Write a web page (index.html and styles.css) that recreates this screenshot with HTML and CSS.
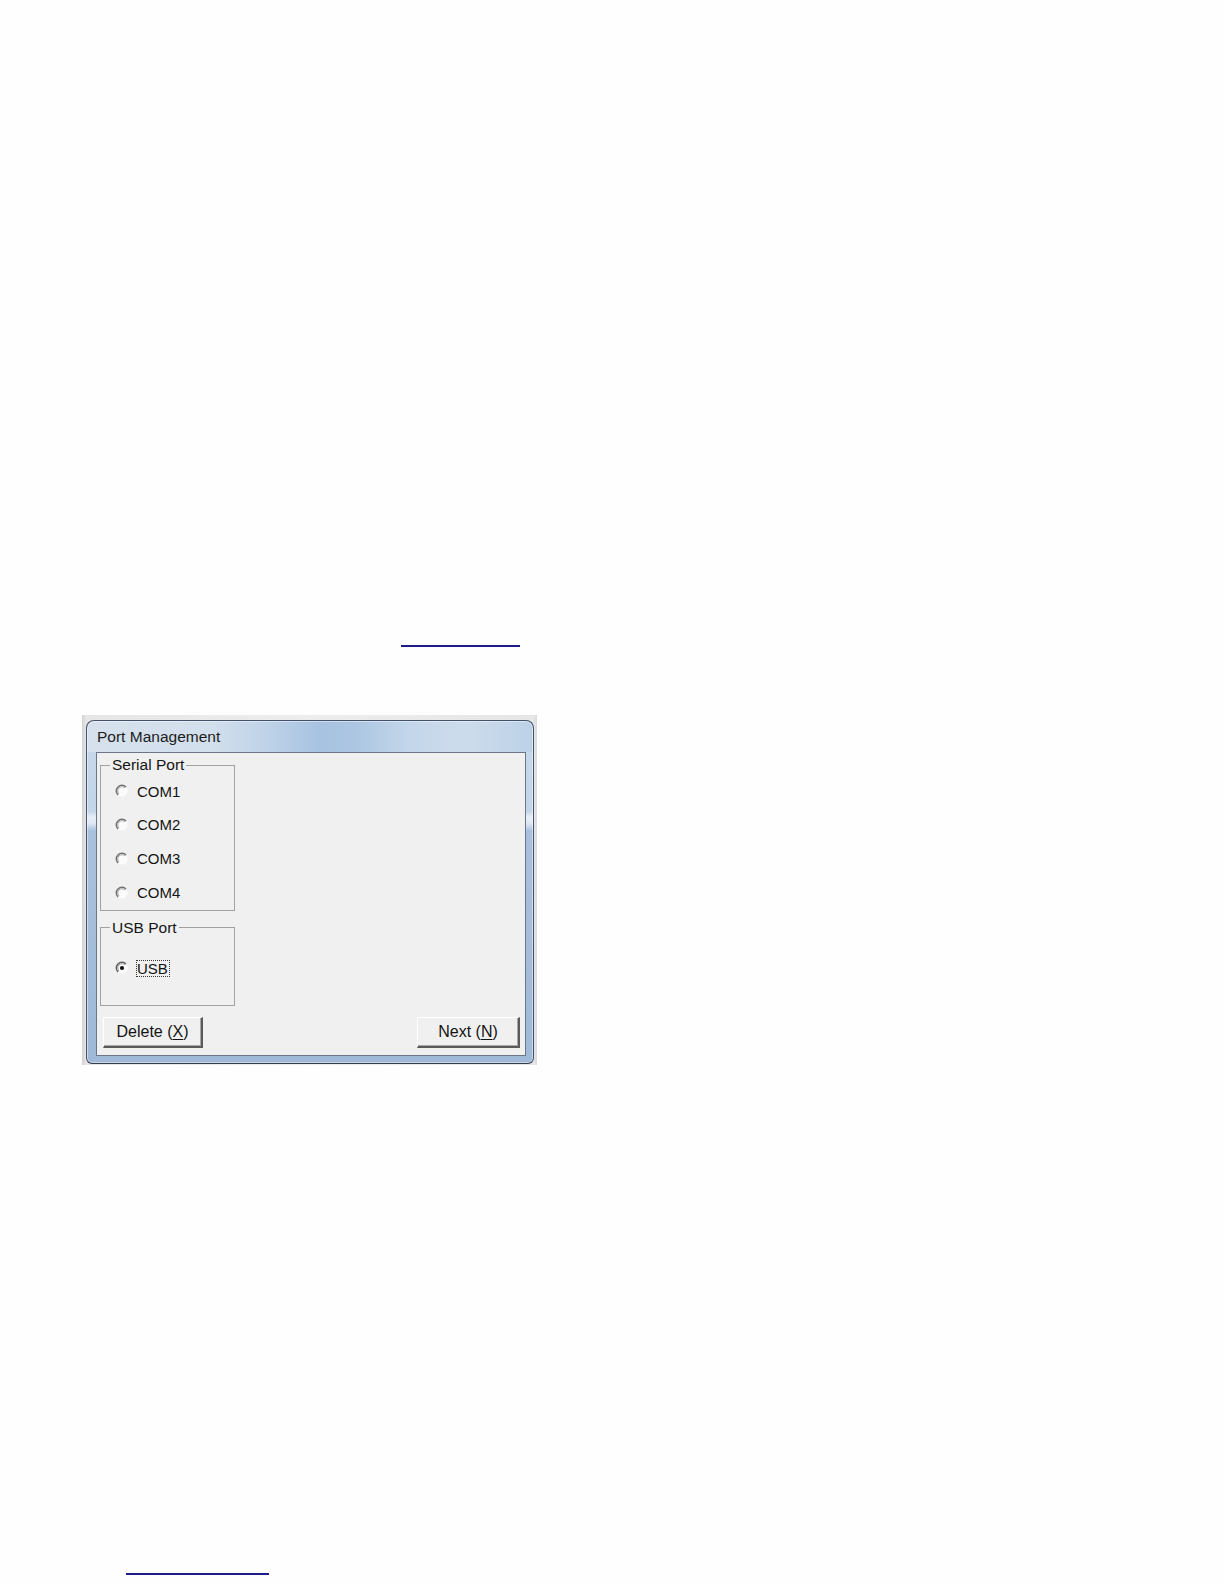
FILE: index.html
```html
<!DOCTYPE html>
<html lang="en">
<head>
<meta charset="utf-8">
<title>Port Management</title>
<link rel="stylesheet" href="styles.css">
</head>
<body>
<div class="page">
  <div class="link-row link-row-top"><a class="link link-top" href="#"></a></div>

  <div class="shot">
    <div class="window">
      <div class="titlebar">Port Management</div>
      <div class="client">
        <fieldset class="group group-serial">
          <legend>Serial Port</legend>
          <div class="radio-row">
            <svg class="radio" width="14" height="14" viewBox="0 0 14 14"><circle cx="7" cy="7" r="5.6" fill="#fbfbfb"/><path d="M11 3 A5.6 5.6 0 0 0 3 11" fill="none" stroke="#6e6e6e" stroke-width="1.5"/><path d="M10 4 A4.2 4.2 0 0 0 4 10" fill="none" stroke="#a4a4a4" stroke-width="1"/></svg>
            <span class="label">COM1</span>
          </div>
          <div class="radio-row">
            <svg class="radio" width="14" height="14" viewBox="0 0 14 14"><circle cx="7" cy="7" r="5.6" fill="#fbfbfb"/><path d="M11 3 A5.6 5.6 0 0 0 3 11" fill="none" stroke="#6e6e6e" stroke-width="1.5"/><path d="M10 4 A4.2 4.2 0 0 0 4 10" fill="none" stroke="#a4a4a4" stroke-width="1"/></svg>
            <span class="label">COM2</span>
          </div>
          <div class="radio-row">
            <svg class="radio" width="14" height="14" viewBox="0 0 14 14"><circle cx="7" cy="7" r="5.6" fill="#fbfbfb"/><path d="M11 3 A5.6 5.6 0 0 0 3 11" fill="none" stroke="#6e6e6e" stroke-width="1.5"/><path d="M10 4 A4.2 4.2 0 0 0 4 10" fill="none" stroke="#a4a4a4" stroke-width="1"/></svg>
            <span class="label">COM3</span>
          </div>
          <div class="radio-row">
            <svg class="radio" width="14" height="14" viewBox="0 0 14 14"><circle cx="7" cy="7" r="5.6" fill="#fbfbfb"/><path d="M11 3 A5.6 5.6 0 0 0 3 11" fill="none" stroke="#6e6e6e" stroke-width="1.5"/><path d="M10 4 A4.2 4.2 0 0 0 4 10" fill="none" stroke="#a4a4a4" stroke-width="1"/></svg>
            <span class="label">COM4</span>
          </div>
        </fieldset>

        <fieldset class="group group-usb">
          <legend>USB Port</legend>
          <div class="radio-row">
            <svg class="radio" width="14" height="14" viewBox="0 0 14 14"><circle cx="7" cy="7" r="5.6" fill="#fbfbfb"/><path d="M11 3 A5.6 5.6 0 0 0 3 11" fill="none" stroke="#5e5e5e" stroke-width="1.5"/><path d="M10 4 A4.2 4.2 0 0 0 4 10" fill="none" stroke="#9a9a9a" stroke-width="1"/><circle cx="7" cy="7" r="2.1" fill="#111"/></svg>
            <span class="label label-focus">USB</span>
          </div>
        </fieldset>

        <div class="buttons">
          <button class="btn btn-delete" type="button">Delete (<u>X</u>)</button>
          <button class="btn btn-next" type="button">Next (<u>N</u>)</button>
        </div>
      </div>
    </div>
  </div>

  <div class="link-row link-row-bottom"><a class="link link-bottom" href="#"></a></div>
</div>
</body>
</html>
```

FILE: styles.css
```css
html, body {
  margin: 0;
  padding: 0;
  background: #fefefe;
}

.page {
  padding-top: 645px;
  font-family: "Liberation Sans", Arial, sans-serif;
  color: #151515;
}

.link-row {
  display: flex;
}

.link {
  display: block;
  height: 0;
  border-bottom: 2px solid #1c1c8c;
}

.link-top {
  margin-left: 401px;
  width: 119px;
}

.link-row-bottom {
  margin-top: 508px;
}

.link-bottom {
  margin-left: 126px;
  width: 143px;
}

/* screenshot of the dialog */
.shot {
  margin-top: 68px;
  margin-left: 82px;
  width: 455px;
  height: 350px;
  box-sizing: border-box;
  padding: 5px 3px 1px 4px;
  background: linear-gradient(to right, #d2d2d2 0, #e6e6e6 4px, #ededed 50%, #e6e6e6 calc(100% - 3px), #d8d8d8 100%);
}

.window {
  box-sizing: border-box;
  width: 448px;
  height: 344px;
  border: 1px solid #43526a;
  border-bottom-color: #333d4a;
  border-radius: 8px 8px 6px 6px;
  background:
    linear-gradient(to right, #d6e1ed 0%, #d2dfec 28%, #bfd3e8 40%, #a7c3e1 52%, #acc6e2 60%, #c3d6ea 72%, #cddcec 85%, #bcd1e7 100%) top left / 100% 31px no-repeat,
    linear-gradient(to bottom, #c9d9ea 0, #c3d5e9 90px, #e6eef7 96px, #e0e9f4 102px, #a9c1dd 110px, #a0b9d6 100%);
  padding: 0 7px 7px 9px;
  box-shadow: inset 0 0 0 1px rgba(255, 255, 255, 0.45);
}

.titlebar {
  height: 31px;
  line-height: 31px;
  font-size: 15.5px;
  color: #1c1c1c;
  padding-left: 2px;
  margin-left: -1px;
  white-space: nowrap;
}

.client {
  box-sizing: border-box;
  width: 430px;
  height: 304px;
  border: 1px solid #6a7788;
  background: #f0f0f0;
  padding: 3.3px 4px 6.7px 3px;
  display: flex;
  flex-direction: column;
}

.group {
  margin: 0;
  width: 135px;
  box-sizing: border-box;
  border: 1px solid #a2a2a2;
  padding: 0 0 0 9px;
  min-inline-size: 0;
}

.group legend {
  font-size: 15.5px;
  line-height: 18px;
  padding: 0 2px;
  color: #151515;
}

.group-serial {
  padding-bottom: 0.2px;
}

.group-usb {
  margin-top: 8px;
  padding-top: 14.6px;
  padding-bottom: 20px;
}

.radio-row {
  height: 33.8px;
  display: flex;
  align-items: center;
  padding-left: 4.5px;
}

.radio {
  flex: none;
  display: block;
}

.label {
  font-size: 15px;
  line-height: 15px;
  margin-left: 8.5px;
  color: #141414;
}

.label-focus {
  margin-left: 7.5px;
  border: 1px dotted #3a3a3a;
  padding: 0 1px 0 0;
  line-height: 15px;
}

.buttons {
  margin-top: 11px;
  display: flex;
  justify-content: space-between;
  padding: 0 0.7px 0 2.7px;
}

.btn {
  box-sizing: border-box;
  height: 31px;
  font-family: "Liberation Sans", Arial, sans-serif;
  font-size: 16px;
  color: #141414;
  background: #f0f0f0;
  border-style: solid;
  border-width: 1px 2px 2px 1px;
  border-color: #ffffff #5a5a5a #5a5a5a #ffffff;
  box-shadow: inset -1px -1px 0 #a8a8a8;
  padding: 0;
  margin: 0;
}

.btn u {
  text-decoration-thickness: 1px;
  text-underline-offset: 2px;
}

.btn-delete {
  width: 100.6px;
}

.btn-next {
  width: 103.6px;
}
```
